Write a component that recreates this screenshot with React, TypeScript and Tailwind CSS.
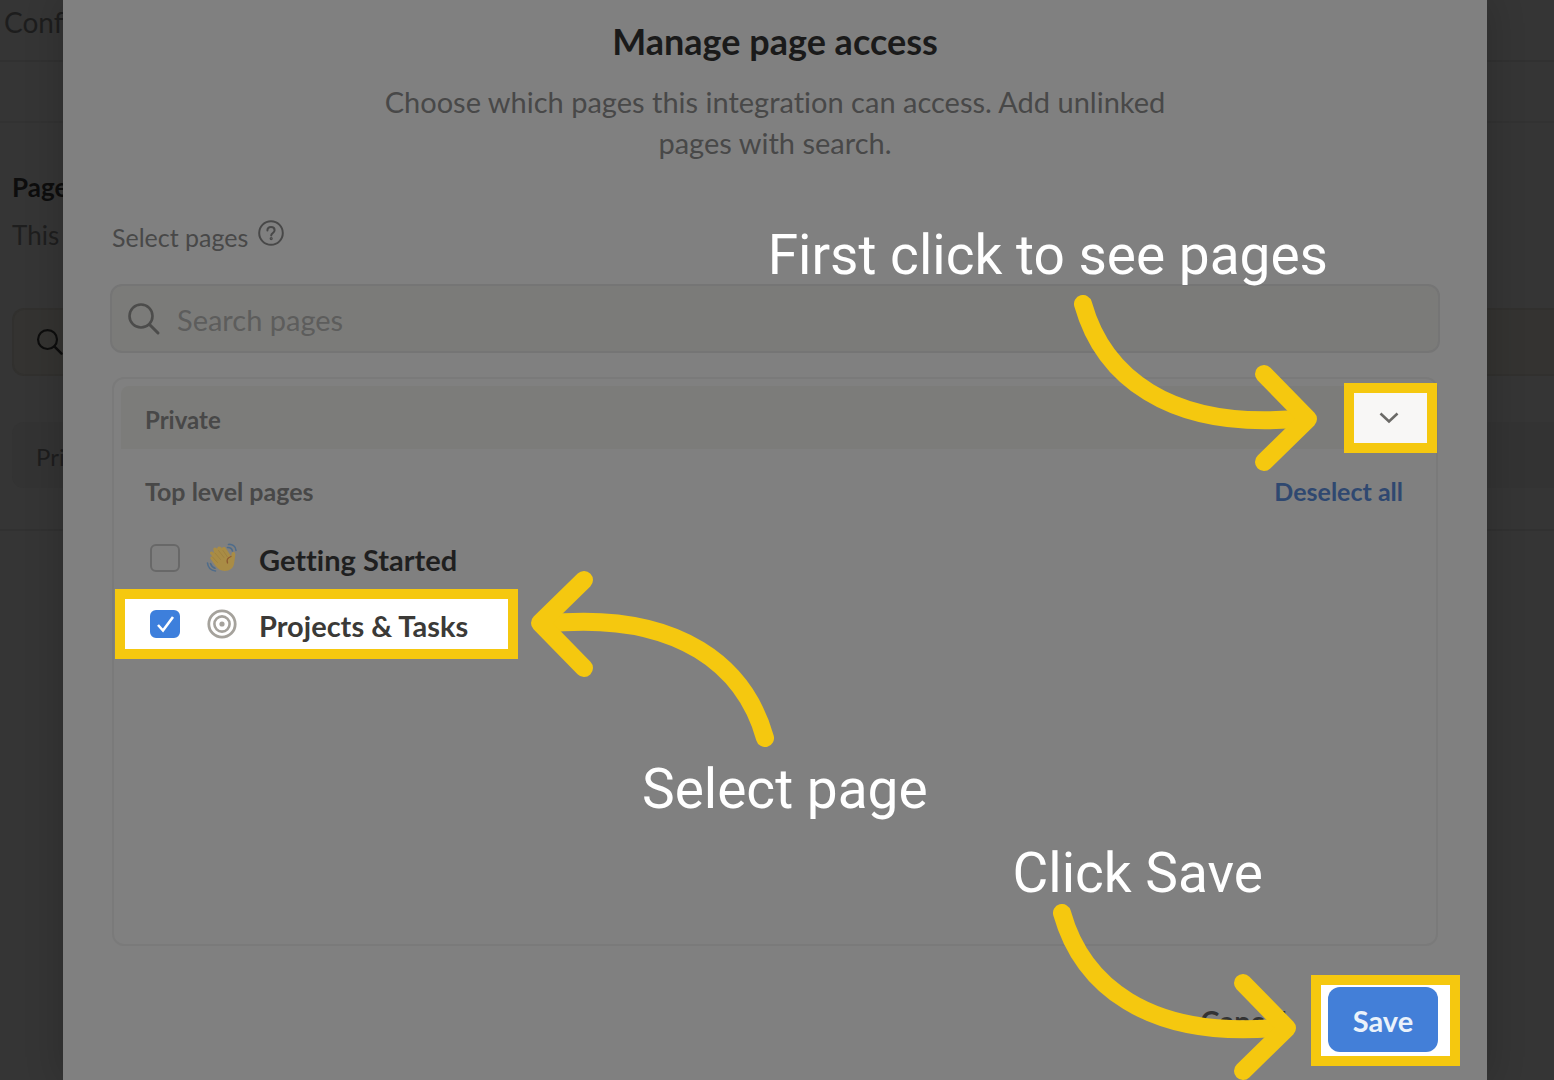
import React from "react";

const WAVE_BLUE = "#4f6c8a";

function SearchIcon({ className }: { className: string }) {
  return (
    <svg viewBox="0 0 34 34" fill="none" stroke="currentColor" className={className} aria-hidden="true">
      <circle cx="14" cy="14" r="11.5" strokeWidth="2.6" />
      <path d="M22.5 22.5 31 31" strokeWidth="3" strokeLinecap="round" />
    </svg>
  );
}

function HelpIcon() {
  return (
    <svg viewBox="0 0 26 26" fill="none" stroke="currentColor" strokeWidth="2" className="size-[26px]" aria-hidden="true">
      <circle cx="13" cy="13" r="11.8" />
      <path d="M9.4 10.6c0-2.2 1.5-3.6 3.6-3.6s3.6 1.3 3.6 3.2c0 2.6-3.4 2.8-3.4 5.2" strokeLinecap="round" />
      <circle cx="13.2" cy="18.6" r="0.6" />
    </svg>
  );
}

function WaveIcon() {
  return (
    <svg viewBox="0 0 32 32" fill="none" className="size-8" aria-hidden="true">
      <path
        d="M4 11.5c-.4-1.7 1.5-2.8 2.8-1.6L8 11 7.300 7.600C7 5.700 9 4.800 10.300 6l.9.9c-.2-2.300 2-3.300 3.600-1.800l1.100 1.100c1-1.700 3-1.500 4.100.2l5.200 8c.3-2.300.2-4 1.800-4.400 1.800-.4 2.500 1.300 2.300 3.200l-1.200 8.300c-.7 4.700-4.500 7.500-9.400 7.500-3.800 0-6.700-1.700-9-4.900l-5-7c-1-1.500.1-3.100 1.700-2.600L4 11.500Z"
        fill="#a98c45"
      />
      <path d="m9 11 5.500 6.500M12.500 8.500l5.500 7M17 8.500l4.500 6.500M6.500 15l5 5.500" stroke="#9c7f3e" strokeWidth="0.800" strokeLinecap="round" />
      <path d="M25 14.500c-3 1-4.500 3.500-3.500 6.500" stroke="#8d5a30" strokeWidth="1.300" strokeLinecap="round" />
      <path d="M22.500 2.500c3.500-.8 7.500 2 7.500 6M21.500 5.500c2.500-.2 4.500 1.500 5 3.500" stroke={WAVE_BLUE} strokeWidth="1.600" strokeLinecap="round" />
      <path d="M1.500 21c.5 4.500 3.500 7.500 8 8M4.500 21.500c.8 2.500 2.500 4 4.500 4.700" stroke={WAVE_BLUE} strokeWidth="1.600" strokeLinecap="round" />
    </svg>
  );
}

function TargetIcon() {
  return (
    <svg viewBox="0 0 32 32" fill="none" stroke="#a5a29c" className="size-8" aria-hidden="true">
      <circle cx="16" cy="16" r="13.200" strokeWidth="2.800" />
      <circle cx="16" cy="16" r="7.600" strokeWidth="2.600" />
      <circle cx="16" cy="16" r="2.600" fill="#a5a29c" stroke="none" />
    </svg>
  );
}

function CurvedArrow({ className }: { className: string }) {
  return (
    <svg
      viewBox="0 0 244 178"
      fill="none"
      stroke="#f5c80f"
      strokeWidth="18"
      strokeLinecap="round"
      strokeLinejoin="round"
      className={`pointer-events-none absolute h-[178px] w-[244px] max-w-none ${className}`}
      aria-hidden="true"
    >
      <path d="M9 9C28 77 91 138 232 123" />
      <path d="M190 79 234 124 190 167" />
    </svg>
  );
}

function Callout({ className, children }: { className: string; children: React.ReactNode }) {
  return (
    <p
      className={`pointer-events-none absolute font-[Roboto,sans-serif] text-[55px] leading-[64px] font-normal whitespace-nowrap text-white ${className}`}
    >
      {children}
    </p>
  );
}

function BackgroundPage() {
  return (
    <div className="absolute inset-0 overflow-hidden bg-[#353535]" aria-hidden="true">
      <div className="flex h-[62px] items-start border-b-2 border-[#313131] px-1 pt-[3px] text-[28px] leading-[38px] text-[#1d1d1d]">
        Conf
      </div>
      <div className="h-[61px] border-b-2 border-[#323232]" />
      <div className="border-b-2 border-[#313131] pt-11 pb-[41px] pl-3">
        <h2 className="text-[26px] leading-[40px] font-bold text-[#0d0d0d]">Page</h2>
        <p className="mt-2 text-[26px] leading-[40px] text-[#1e1e1e]">This</p>
        <div className="mt-[53px] flex h-[68px] items-center rounded-l-xl border-2 border-r-0 border-[#31302e] bg-[#343331] pl-[22px] text-[#0d0d0d]">
          <SearchIcon className="size-7" />
        </div>
        <div className="mt-[46px] flex h-[66px] items-center rounded-l-xl bg-[#333333] pt-1 pl-6 text-[24px] text-[#1d1d1d]">
          Pri
        </div>
      </div>
    </div>
  );
}

export default function App() {
  return (
    <div className="relative min-h-screen overflow-hidden font-[Lato,sans-serif] [font-variant-ligatures:none]">
      <BackgroundPage />
      <div className="relative pr-[67px] pl-[63px]">
        <main
          role="dialog"
          aria-labelledby="dialog-title"
          className="flex min-h-screen flex-col bg-[#808080] px-[47px] pt-[21px] pb-[14px] shadow-[0_0_36px_rgba(0,0,0,0.2)]"
        >
          <h1 id="dialog-title" className="text-center text-[36px] leading-[40px] font-bold text-[#1a1a1a]">
            Manage page access
          </h1>
          <p className="mx-auto mt-5 max-w-[820px] text-center text-[29px] leading-[41px] text-[#484848]">
            Choose which pages this integration can access. Add unlinked pages with search.
          </p>

          <div className="mt-[54px] flex h-10 gap-2.5 text-[#484848]">
            <label htmlFor="search" className="pl-0.5 text-[25px] leading-[40px]">
              Select pages
            </label>
            <button type="button" aria-label="Help" className="flex h-8 items-center">
              <HelpIcon />
            </button>
          </div>

          <div className="mt-[27px] flex h-[69px] items-center gap-4 rounded-xl border-2 border-[#757575] bg-[#7b7b79] px-[15px] text-[#4c4c4b]">
            <SearchIcon className="size-[34px] shrink-0" />
            <input
              id="search"
              type="text"
              placeholder="Search pages"
              className="h-full w-full bg-transparent pt-0.5 text-[29px] text-[#333333] outline-none placeholder:text-[#5d5d5c]"
            />
          </div>

          <section className="mx-0.5 mt-6 flex min-h-[569px] grow flex-col rounded-xl border-2 border-[#7a7a7a] p-[7px]">
            <div className="flex h-[63px] items-center justify-between rounded-t-lg bg-[#7c7c7a] pl-6">
              <h2 className="pt-1 text-[24px] font-bold text-[#484848]">Private</h2>
              <div className="relative -mr-2">
                <button
                  type="button"
                  aria-label="Toggle private pages"
                  className="flex h-[70px] w-[93px] items-center justify-center border-10 border-[#f5c80f] bg-[#f8f7f6] pr-1"
                >
                  <svg viewBox="0 0 20 12" fill="none" stroke="#6b6a67" strokeWidth="2.600" className="h-3 w-5" aria-hidden="true">
                    <path d="m1.500 1.500 8.500 8 8.500-8" />
                  </svg>
                </button>
                <CurvedArrow className="-top-[88px] right-[119px]" />
                <Callout className="-top-[160px] right-[109px]">First click to see pages</Callout>
              </div>
            </div>

            <div className="mt-[23px] flex h-10 items-center justify-between pr-[26px] pl-6 text-[25px] font-bold">
              <h3 className="text-[#484848]">Top level pages</h3>
              <button type="button" className="text-[#2f4870]">
                Deselect all
              </button>
            </div>

            <ul className="mt-[15px] text-[29px] font-bold">
              <li>
                <label className="flex h-[62px] items-center pl-[29px] text-[#1f1f1f]">
                  <input type="checkbox" className="h-7 w-[30px] appearance-none rounded-md border-2 border-[#686868]" />
                  <span className="mr-[21px] ml-[26px]">
                    <WaveIcon />
                  </span>
                  <span className="pt-1">Getting Started</span>
                </label>
              </li>
              <li className="flex">
                <div className="relative -ml-1.5">
                  <label className="flex h-[70px] w-[403px] items-center border-10 border-[#f5c80f] bg-white pl-[25px] whitespace-nowrap text-[#3b3a37]">
                    <span className="relative h-7 w-[30px]">
                      <input
                        type="checkbox"
                        defaultChecked
                        className="peer block h-7 w-[30px] appearance-none rounded-md border-2 border-[#a5a29c] checked:border-[#3d7fdc] checked:bg-[#3d7fdc]"
                      />
                      <svg
                        viewBox="0 0 30 28"
                        fill="none"
                        stroke="#ffffff"
                        strokeWidth="2.600"
                        className="pointer-events-none absolute inset-0 hidden peer-checked:block"
                        aria-hidden="true"
                      >
                        <path d="m8 15 5 5.500L23 7" />
                      </svg>
                    </span>
                    <span className="mr-[21px] ml-[26px]">
                      <TargetIcon />
                    </span>
                    <span className="pt-1">Projects &amp; Tasks</span>
                  </label>
                  <CurvedArrow className="-top-[20px] left-[415px] rotate-180" />
                  <Callout className="top-[168px] left-[527px]">Select page</Callout>
                </div>
              </li>
            </ul>
          </section>

          <footer className="mt-[29px] flex items-center justify-end gap-6">
            <button type="button" className="text-[29px] font-bold text-[#333333]">
              Cancel
            </button>
            <div className="relative -mr-5">
              <div className="flex h-[91px] w-[149px] items-start border-10 border-[#f5c80f] bg-white pt-0.5 pl-[7px]">
                <button type="button" className="h-[65px] w-[110px] rounded-xl bg-[#437fd8] pt-0.5 text-[29px] font-bold text-[#eaf2fb]">
                  Save
                </button>
              </div>
              <CurvedArrow className="-top-[71px] right-[163px]" />
              <Callout className="-top-[134px] right-[197px]">Click Save</Callout>
            </div>
          </footer>
        </main>
      </div>
    </div>
  );
}
